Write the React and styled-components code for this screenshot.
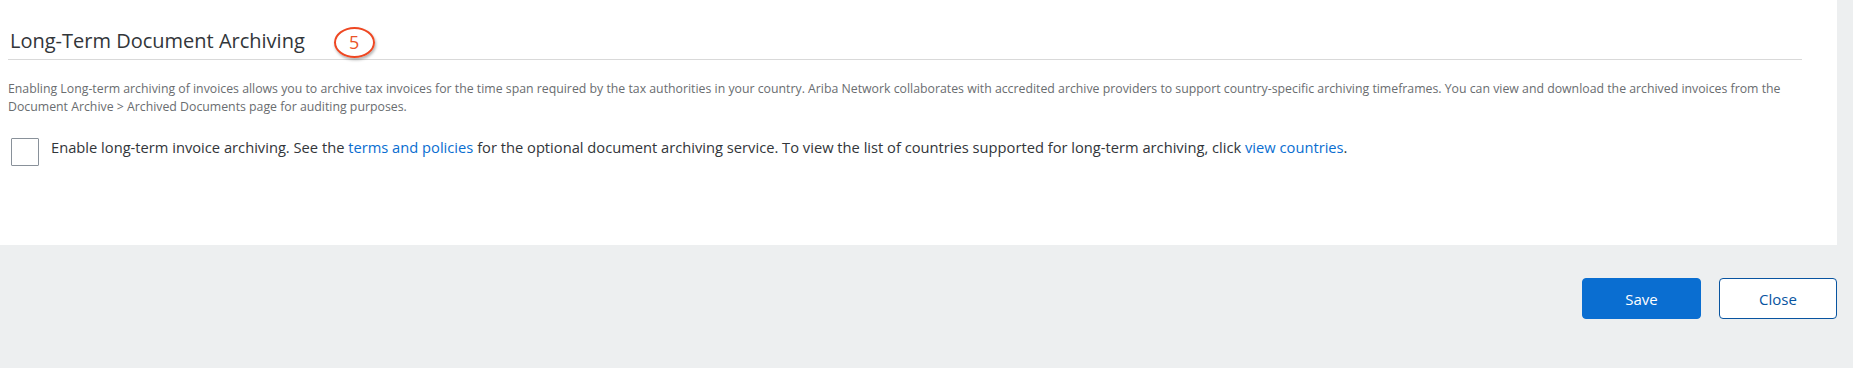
import React from 'react';
import styled, { createGlobalStyle } from 'styled-components';

const GlobalStyle = createGlobalStyle`
  html, body {
    margin: 0;
    padding: 0;
    background: #ffffff;
  }
  body {
    font-family: "Open Sans", "Liberation Sans", Arial, sans-serif;
  }
`;

const Page = styled.div`
  width: 1853px;
  height: 368px;
  background-color: #edeff0;
  display: flex;
  flex-direction: column;
`;

const Panel = styled.section`
  width: 1837px;
  height: 245px;
  box-sizing: border-box;
  background-color: #ffffff;
  padding: 28px 35px 0 8px;
`;

const Header = styled.div`
  display: flex;
  align-items: center;
  padding-bottom: 5px;
  border-bottom: 1px solid #d9d9d9;
`;

const Title = styled.h2`
  margin: 0 0 0 2px;
  font-size: 20px;
  line-height: 26px;
  font-weight: normal;
  color: #32363a;
`;

const Badge = styled.span`
  display: inline-flex;
  align-items: center;
  justify-content: center;
  width: 41px;
  height: 31px;
  box-sizing: border-box;
  margin: -2px 0 -4px 29px;
  border: 2.5px solid #ee4722;
  border-radius: 50%;
  box-shadow: 1px 2px 3px rgba(0, 0, 0, 0.3);
  color: #ea5329;
  font-size: 18px;
  line-height: 1;
`;

const Description = styled.p`
  margin: 20px 0 0;
  font-size: 12.3px;
  line-height: 18px;
  color: #6a6d70;
`;

const CheckRow = styled.label`
  display: flex;
  align-items: flex-start;
  gap: 12px;
  margin-top: 22px;
  padding-left: 3px;
`;

const Box = styled.span`
  flex: none;
  width: 28px;
  height: 28px;
  box-sizing: border-box;
  border: 1px solid #89919a;
  border-radius: 1px;
  background: #ffffff;
`;

const Label = styled.span`
  margin-top: -1px;
  font-size: 14.7px;
  line-height: 20px;
  color: #32363a;
`;

const Link = styled.a`
  color: #0a6ed1;
  text-decoration: none;
`;

const Footer = styled.div`
  flex: 1;
  display: flex;
  justify-content: flex-end;
  align-items: flex-start;
  gap: 18px;
  padding: 33px 16px 0 0;
`;

const Button = styled.button`
  width: ${(p) => p.$width}px;
  height: 41px;
  border-radius: 4px;
  font-family: "Open Sans", "Liberation Sans", Arial, sans-serif;
  font-size: 15px;
  cursor: pointer;
  border: 1px solid ${(p) => (p.$primary ? '#0a6ed1' : '#0854a0')};
  background-color: ${(p) => (p.$primary ? '#0a6ed1' : '#ffffff')};
  color: ${(p) => (p.$primary ? '#ffffff' : '#0854a0')};
`;

const App = () => {
  return (
    <>
      <GlobalStyle />
      <Page>
        <Panel>
          <Header>
            <Title>Long-Term Document Archiving</Title>
            <Badge>5</Badge>
          </Header>
          <Description>
            Enabling Long-term archiving of invoices allows you to archive tax invoices for the time span required by
            the tax authorities in your country. Ariba Network collaborates with accredited archive providers to support
            country-specific archiving timeframes. You can view and download the archived invoices from the Document
            Archive &gt; Archived Documents page for auditing purposes.
          </Description>
          <CheckRow>
            <Box />
            <Label>
              Enable long-term invoice archiving. See the <Link href="#">terms and policies</Link> for the optional
              document archiving service. To view the list of countries supported for long-term archiving, click{' '}
              <Link href="#">view countries</Link>.
            </Label>
          </CheckRow>
        </Panel>
        <Footer>
          <Button $primary $width={119}>Save</Button>
          <Button $width={118}>Close</Button>
        </Footer>
      </Page>
    </>
  );
};

export default App;
